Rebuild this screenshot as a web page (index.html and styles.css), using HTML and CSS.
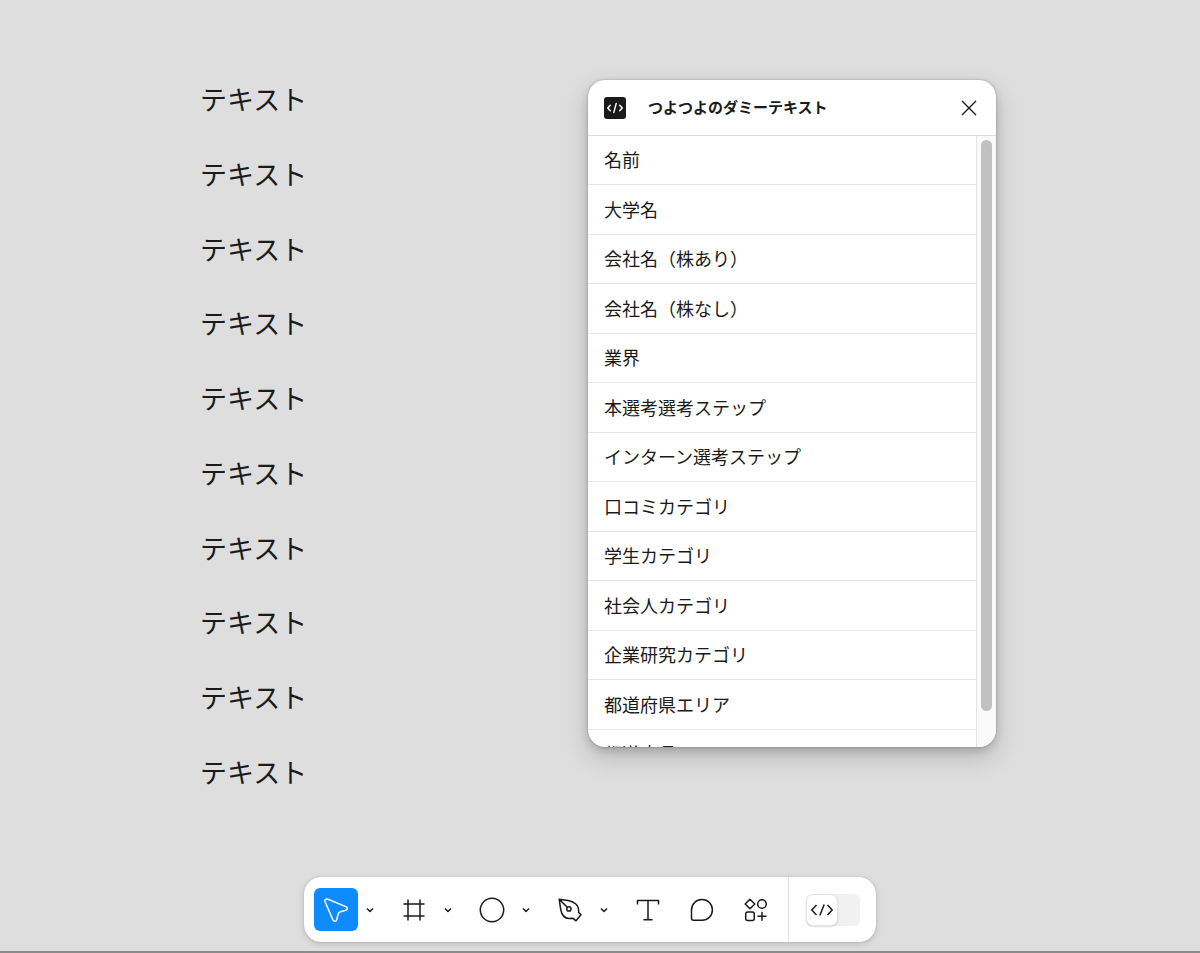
FILE: index.html
```html
<!DOCTYPE html>
<html lang="ja">
  <head>
    <meta charset="UTF-8" />
    <meta name="viewport" content="width=device-width, initial-scale=1.0" />
    <title>つよつよのダミーテキスト</title>
    <link rel="stylesheet" href="styles.css">
  </head>
  <body>
    <main class="workspace">
      <div class="text-layers">
        <p>テキスト</p>
        <p>テキスト</p>
        <p>テキスト</p>
        <p>テキスト</p>
        <p>テキスト</p>
        <p>テキスト</p>
        <p>テキスト</p>
        <p>テキスト</p>
        <p>テキスト</p>
        <p>テキスト</p>
      </div>

      <section class="panel">
        <header class="panel-header">
          <svg class="panel-logo" width="22" height="22" viewBox="0 0 22 22" fill="none" stroke="#fff" stroke-width="1.4" stroke-linecap="round" stroke-linejoin="round">
            <rect width="22" height="22" rx="3" fill="#1a1a1a" stroke="none" />
            <path d="M6.3 8.3 3.7 11l2.6 2.7M15.7 8.3l2.6 2.7-2.6 2.7M12.2 6.5l-2.4 9" />
          </svg>
          <h1>つよつよのダミーテキスト</h1>
          <button type="button" class="close" aria-label="閉じる">
            <svg width="16" height="16" viewBox="0 0 16 16" fill="none" stroke="#1a1a1a" stroke-width="1.4">
              <path d="M1 1l14 14M15 1L1 15" />
            </svg>
          </button>
        </header>
        <div class="panel-body">
          <ul class="category-list">
            <li><button type="button">名前</button></li>
            <li><button type="button">大学名</button></li>
            <li><button type="button">会社名（株あり）</button></li>
            <li><button type="button">会社名（株なし）</button></li>
            <li><button type="button">業界</button></li>
            <li><button type="button">本選考選考ステップ</button></li>
            <li><button type="button">インターン選考ステップ</button></li>
            <li><button type="button">口コミカテゴリ</button></li>
            <li><button type="button">学生カテゴリ</button></li>
            <li><button type="button">社会人カテゴリ</button></li>
            <li><button type="button">企業研究カテゴリ</button></li>
            <li><button type="button">都道府県エリア</button></li>
            <li><button type="button">都道府県</button></li>
          </ul>
          <div class="scroll-track"><div class="scroll-thumb"></div></div>
        </div>
      </section>
    </main>

    <nav class="toolbar">
      <div class="tools">
        <div class="tool-group">
          <button type="button" class="tool active" aria-label="移動">
            <svg width="24" height="24" viewBox="0 0 24 24">
              <path d="M1.2 4 8.8 21.6Q9.6 23.2 11 23.2 12.4 23.2 12.8 21.6L14.2 16Q14.7 14.3 16.4 13.8L21.8 12.2Q23.3 11.6 23.3 10.4 23.3 9.2 21.8 8.6L4 1.2Q2.3 .6 1.4 1.5 .6 2.4 1.2 4Z" />
            </svg>
          </button>
          <button type="button" class="more" aria-label="移動ツール"><svg width="8" height="6" viewBox="0 0 8 6"><path d="M1 1.5l3 3 3-3" /></svg></button>
        </div>
        <div class="tool-group">
          <button type="button" class="tool" aria-label="フレーム">
            <svg width="24" height="24" viewBox="0 0 24 24"><path d="M6 1.5v21M18 1.5v21M1.5 6h21M1.5 18h21" /></svg>
          </button>
          <button type="button" class="more" aria-label="領域ツール"><svg width="8" height="6" viewBox="0 0 8 6"><path d="M1 1.5l3 3 3-3" /></svg></button>
        </div>
        <div class="tool-group">
          <button type="button" class="tool" aria-label="楕円">
            <svg width="26" height="26" viewBox="0 0 26 26"><circle cx="13" cy="13" r="11.7" /></svg>
          </button>
          <button type="button" class="more" aria-label="シェイプツール"><svg width="8" height="6" viewBox="0 0 8 6"><path d="M1 1.5l3 3 3-3" /></svg></button>
        </div>
        <div class="tool-group">
          <button type="button" class="tool" aria-label="ペン">
            <svg width="24" height="24" viewBox="0 0 24 24">
              <path d="M1.2 1.2 10 2.4C16 3.4 20.6 7 20.6 12V14.4L23 16.8 18 22.8 15 20.3 11 20.6C6.5 20.4 3.6 16.5 2.6 11ZM1.2 1.2l8.1 8.1" />
              <circle cx="10.9" cy="10.9" r="2.1" />
            </svg>
          </button>
          <button type="button" class="more" aria-label="作成ツール"><svg width="8" height="6" viewBox="0 0 8 6"><path d="M1 1.5l3 3 3-3" /></svg></button>
        </div>
        <button type="button" class="tool" aria-label="文字">
          <svg width="24" height="24" viewBox="0 0 24 24"><path d="M1.5 6.5V2.5h21v4M12 2.5v19.3M7.5 21.8h9" /></svg>
        </button>
        <button type="button" class="tool" aria-label="コメント">
          <svg width="24" height="24" viewBox="0 0 24 24"><path d="M12 1.5a10.4 10.4 0 0 1 0 20.8H3.5q-2 0-2-2V12A10.4 10.4 0 0 1 12 1.5z" /></svg>
        </button>
        <button type="button" class="tool" aria-label="アクション">
          <svg width="24" height="24" viewBox="0 0 24 24">
            <path d="M6 1.2 10.8 6 6 10.8 1.2 6Z" />
            <circle cx="18" cy="6" r="4.3" />
            <rect x="1.7" y="13.9" width="8.6" height="8.6" rx="2" />
            <path d="M18 13.8v9M13.5 18.3h9" />
          </svg>
        </button>
      </div>
      <label class="dev-toggle">
        <input type="checkbox" aria-label="開発モード" />
        <span class="knob">
          <svg width="24" height="16" viewBox="0 0 24 16"><path d="M6.5 3 1.8 8l4.7 5M17.5 3l4.7 5-4.7 5M14.2 2.5l-4.4 11" /></svg>
        </span>
      </label>
    </nav>
  </body>
</html>
```
FILE: styles.css
```css
* {
  box-sizing: border-box;
  margin: 0;
  padding: 0;
}

body {
  display: flex;
  flex-direction: column;
  min-height: 100vh;
  background-color: #dedede;
  border-bottom: 2px solid #8a8a8a;
  color: #1a1a1a;
  font-family: "Noto Sans CJK JP", sans-serif;
}

button {
  border: none;
  background: none;
  color: inherit;
  font-family: inherit;
  cursor: pointer;
}

svg {
  display: block;
}

.workspace {
  flex: 1;
  display: flex;
  padding-top: 80px;
}

/* text layers on the canvas */
.text-layers {
  flex: 0 0 49%;
  display: flex;
  flex-direction: column;
  justify-content: space-between;
  padding-left: 200px;
  font-size: 27px;
  line-height: 38px;
  padding-bottom: 2px;
}

/* plugin window */
.panel {
  display: flex;
  flex-direction: column;
  width: 34%;
  height: 70vh;
  overflow: hidden;
  background-color: white;
  border-radius: 17px;
  box-shadow: 0 0 2px rgba(0, 0, 0, 0.3), 0 4px 8px rgba(0, 0, 0, 0.14),
    0 10px 26px rgba(0, 0, 0, 0.18);
}
.panel-header {
  display: flex;
  align-items: center;
  height: 56px;
  padding: 0 16px;
  border-bottom: 1px solid #dcdcdc;
}
.panel-header h1 {
  flex: 1;
  margin-left: 22px;
  padding-bottom: 2px;
  font-size: 15px;
  font-weight: 700;
}
.close {
  padding: 3px;
}
.panel-body {
  flex: 1;
  display: flex;
  min-height: 0;
}
.category-list {
  flex: 1;
  display: grid;
  grid-auto-rows: 8.1%;
  height: 100%;
  overflow: hidden;
  list-style: none;
}
.category-list li {
  border-bottom: 1px solid #e8e8e8;
}
.category-list button {
  width: 100%;
  height: 100%;
  padding: 0 16px 2px;
  font-size: 18px;
  line-height: 24px;
  text-align: left;
}
.scroll-track {
  width: 20px;
  padding: 4px 4px 0;
  border-left: 1px solid #e4e4e4;
  background-color: #fafafa;
}
.scroll-thumb {
  width: 11px;
  height: 94%;
  border-radius: 6px;
  background-color: #c1c1c1;
}

/* bottom toolbar */
.toolbar {
  display: flex;
  align-self: center;
  margin: 84px 21px 9px 0;
  background-color: white;
  border-radius: 17px;
  box-shadow: 0 0 1px rgba(0, 0, 0, 0.3), 0 2px 6px rgba(0, 0, 0, 0.16);
}
.toolbar svg {
  fill: none;
  stroke: #1a1a1a;
  stroke-width: 1.5;
  stroke-linejoin: round;
}
.tools {
  display: flex;
  gap: 10px;
  padding: 11px 10px;
}
.tool-group {
  display: flex;
}
.tool,
.more {
  display: flex;
  align-items: center;
  justify-content: center;
  height: 43px;
}
.tool {
  width: 44px;
  border-radius: 6px;
}
.more {
  width: 24px;
}
.tool.active {
  background-color: #0d8bff;
}
.toolbar .active svg {
  stroke: white;
}
.dev-toggle {
  display: flex;
  align-items: center;
  padding: 0 16px 0 17px;
  border-left: 1px solid #e4e4e4;
  cursor: pointer;
}
.dev-toggle input {
  appearance: none;
  width: 54px;
  height: 32px;
  border-radius: 6px;
  background-color: #f1f1f1;
}
.knob {
  display: flex;
  align-items: center;
  justify-content: center;
  width: 32px;
  height: 32px;
  margin-left: -54px;
  margin-right: 22px;
  border: 1px solid #e4e4e4;
  border-radius: 7px;
  background-color: white;
  box-shadow: 0 1px 2px rgba(0, 0, 0, 0.14);
}
```
